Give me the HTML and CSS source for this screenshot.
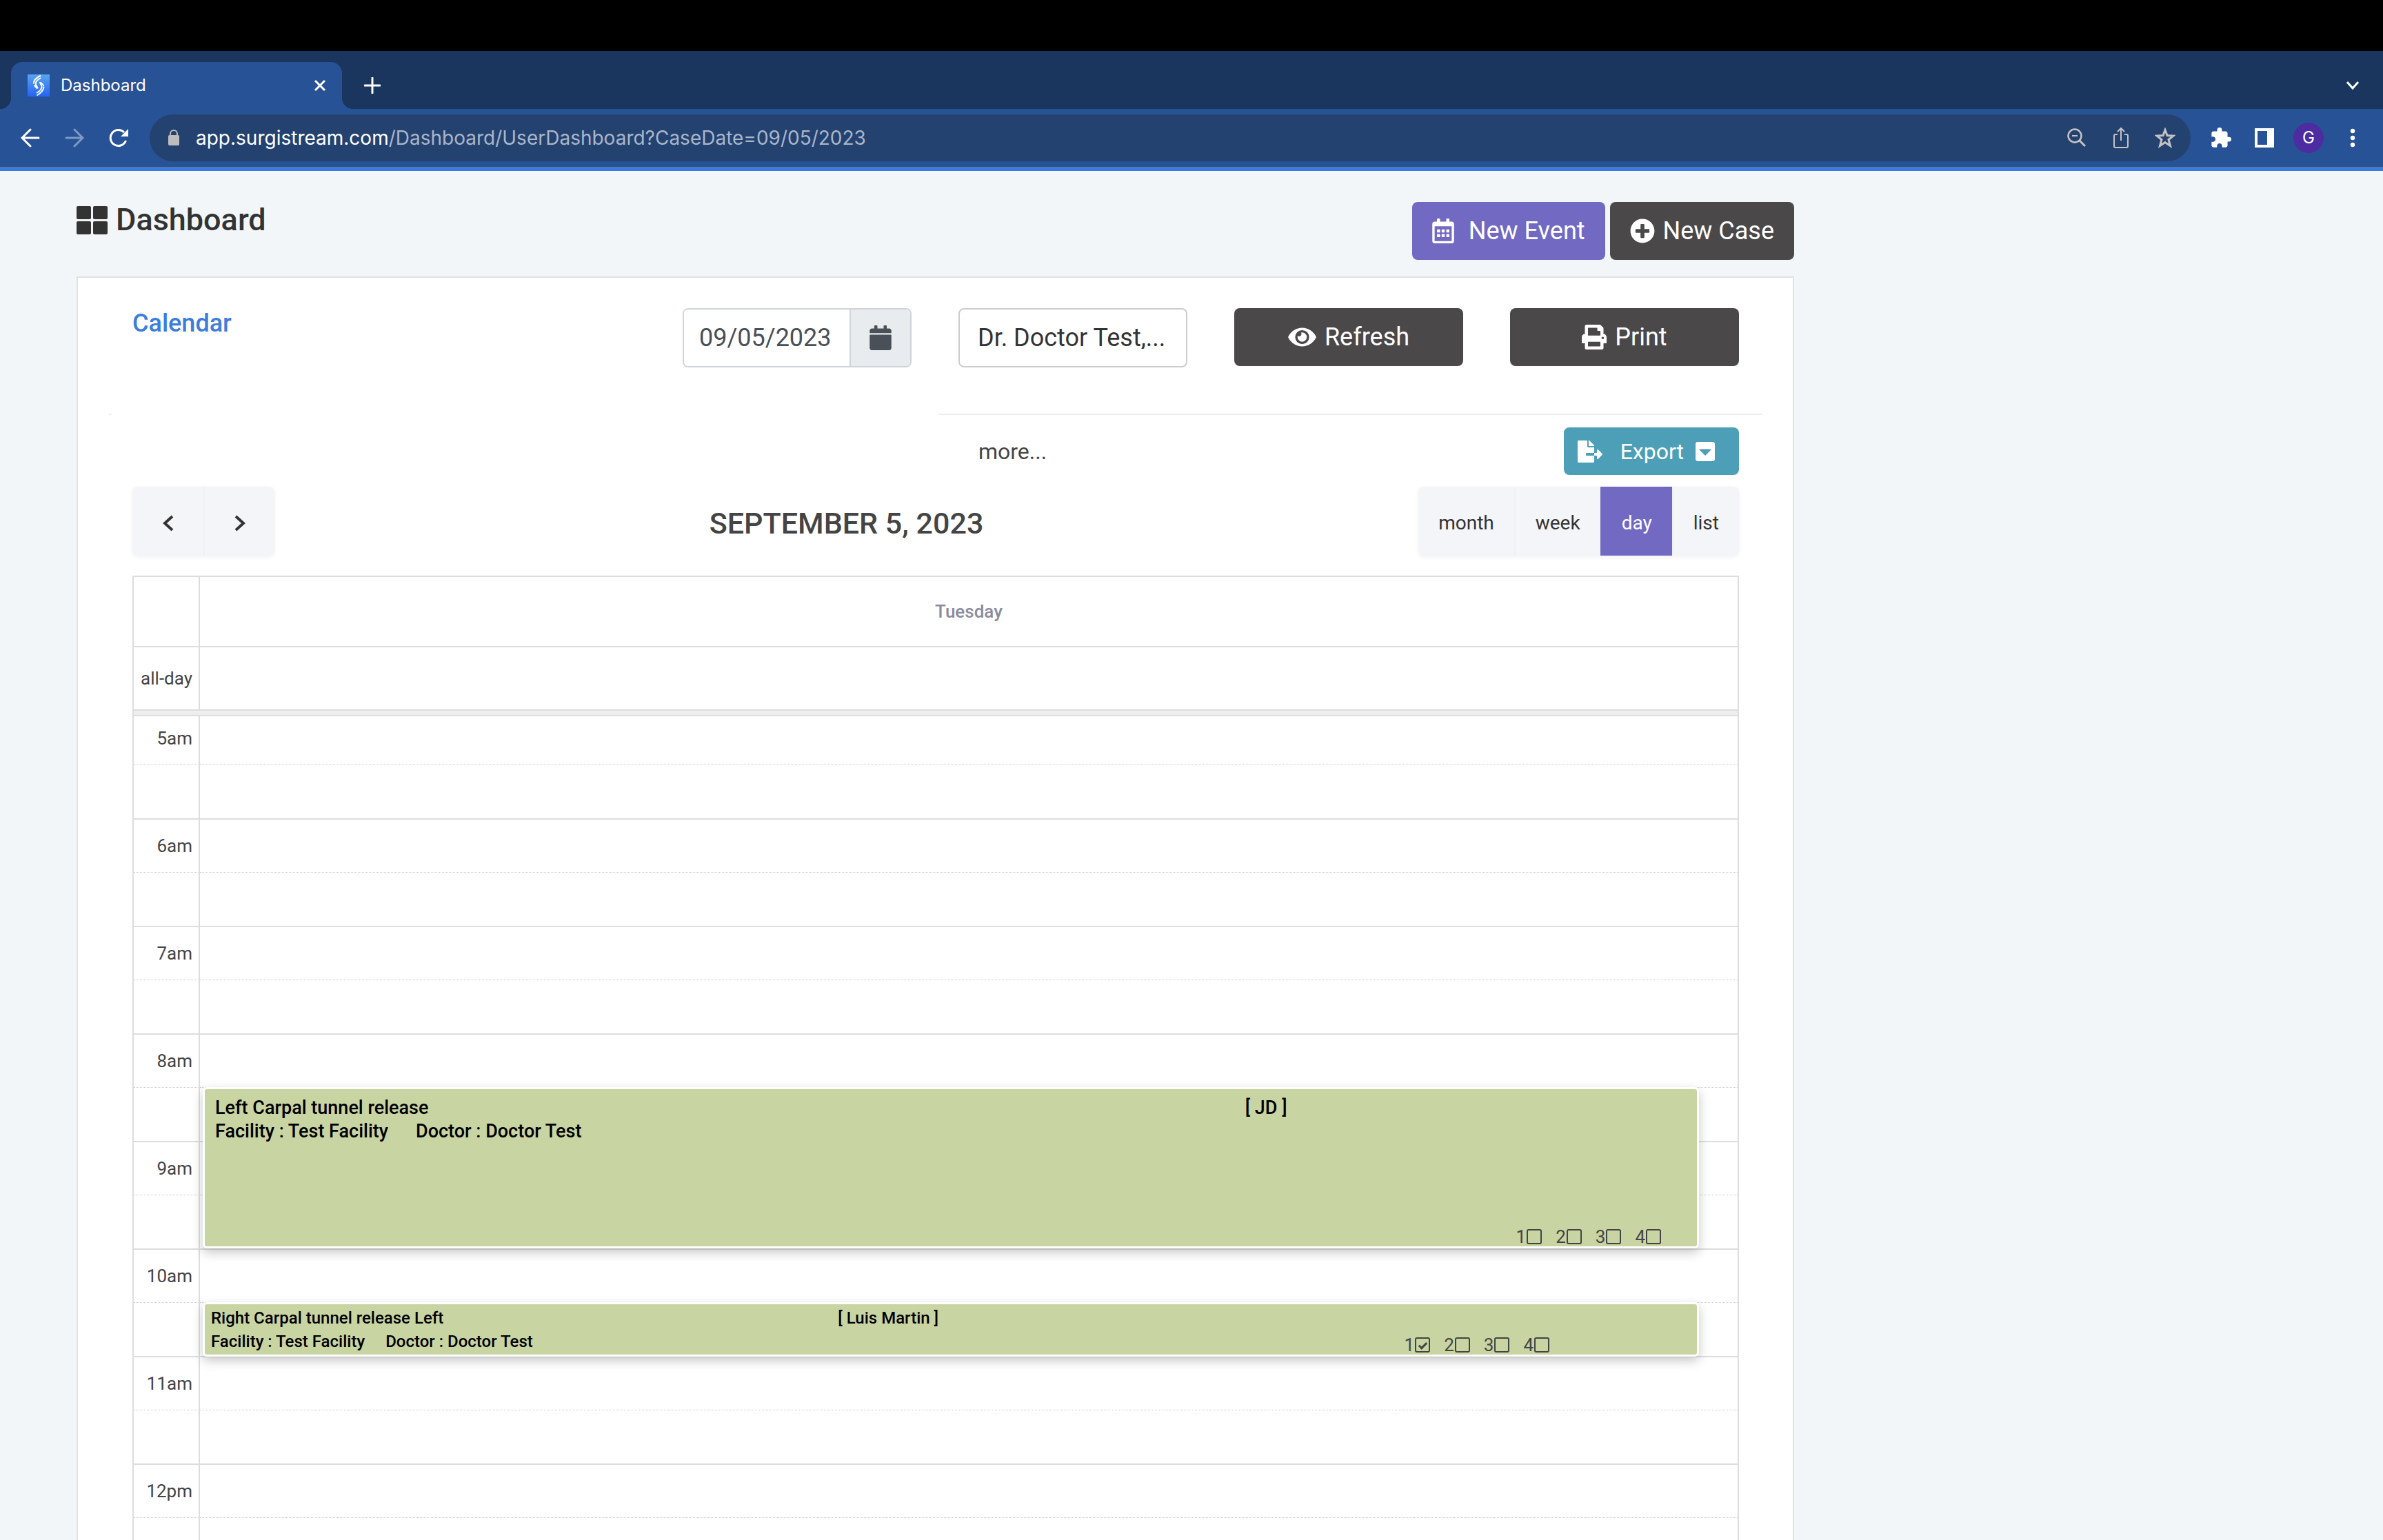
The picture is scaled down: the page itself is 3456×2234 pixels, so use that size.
FILE: index.html
```html
<!DOCTYPE html>
<html lang="en">
<head>
<meta charset="utf-8">
<title>Dashboard</title>
<link rel="stylesheet" href="styles.css">
</head>
<body>
<div class="notch"></div>
<header class="browser">
  <div class="tabstrip">
    <div class="tab">
      <svg class="favicon" viewBox="0 0 32 32"><defs><linearGradient id="fav" x1="0" y1="0" x2="0" y2="1"><stop offset="0" stop-color="#5aa5f0"/><stop offset="1" stop-color="#2563f5"/></linearGradient></defs><rect width="32" height="32" fill="url(#fav)"/><path d="M19 1.500C12 5 8.500 9 9 13.500M19 5C13 8.500 11 11 12 14.500C13 17.500 15 18 14.500 20.500M10 15C10.500 17.500 12 18.500 14 20.500M18 11C17.500 13 20 14.500 20.500 17C21 20 18 24 13 27M18.500 11.500C21 13 23 15 23.500 17.500M23.500 18C23.500 23 19 27 13.500 30.500" fill="none" stroke="#fff" stroke-width="2"/></svg>
      <span class="tab-title">Dashboard</span>
      <button class="plain" aria-label="Close tab"><svg width="18" height="18" viewBox="0 0 18 18"><path d="M2 2L16 16M16 2L2 16" stroke="#fff" stroke-width="3"/></svg></button>
    </div>
    <button class="plain new-tab" aria-label="New tab"><svg width="24" height="24" viewBox="0 0 24 24"><path d="M12 1V23M1 12H23" stroke="#fff" stroke-width="3" stroke-linecap="round"/></svg></button>
    <button class="plain tab-search" aria-label="Search tabs"><svg width="20" height="14" viewBox="0 0 20 14"><path d="M2 2L10 11L18 2" fill="none" stroke="#fff" stroke-width="3"/></svg></button>
  </div>
  <div class="toolbar">
    <div class="nav">
      <button class="plain" aria-label="Back"><svg width="28" height="28" viewBox="0 0 28 28"><path d="M26 14H3M14 2L2 14L14 26" fill="none" stroke="#fff" stroke-width="3" stroke-linecap="round"/></svg></button>
      <button class="plain" aria-label="Forward"><svg width="28" height="28" viewBox="0 0 28 28"><path d="M2 14H25M14 2L26 14L14 26" fill="none" stroke="#7f99c4" stroke-width="3" stroke-linecap="round"/></svg></button>
      <button class="plain" aria-label="Reload"><svg width="28" height="28" viewBox="0 0 28 28"><path d="M24.500 18A11.500 11.500 0 1 1 22 6" fill="none" stroke="#fff" stroke-width="3"/><path d="M28 1V12H17Z" fill="#fff"/></svg></button>
    </div>
    <div class="omnibox">
      <svg width="16" height="24" viewBox="0 0 16 24"><path d="M3 10V6a5 5 0 0 1 10 0V10" fill="none" stroke="#bdbdbd" stroke-width="2"/><rect y="8" width="16" height="15" rx="2" fill="#bdbdbd"/></svg>
      <span class="url"><b>app.surgistream.com</b>/Dashboard/UserDashboard?CaseDate=09/05/2023</span>
      <button class="plain" aria-label="Zoom"><svg width="28" height="28" viewBox="0 0 28 28"><circle cx="12" cy="11" r="9.500" fill="none" stroke="#c4c4c4" stroke-width="2.500"/><path d="M19 18L27 26" stroke="#c4c4c4" stroke-width="3"/><path d="M8 11H16" stroke="#c4c4c4" stroke-width="2"/></svg></button>
      <button class="plain" aria-label="Share"><svg width="28" height="32" viewBox="0 0 28 32"><path d="M10 11H7a2 2 0 0 0-2 2V28a2 2 0 0 0 2 2H23a2 2 0 0 0 2-2V13a2 2 0 0 0-2-2H20M15 20V2M10 7L15 2L20 7" fill="none" stroke="#c4c4c4" stroke-width="2"/></svg></button>
      <button class="plain" aria-label="Bookmark"><svg width="30" height="30" viewBox="0 0 30 30"><path d="M15 3.500L18 11.500L27 12L20 17.500L22.500 26.500L15 21.500L7.500 26.500L10 17.500L3 12L12 11.500Z" fill="none" stroke="#c4c4c4" stroke-width="3"/></svg></button>
    </div>
    <div class="extensions">
      <button class="plain" aria-label="Extensions"><svg width="30" height="30" viewBox="1 1 22 22"><path d="M20.500 11H19V7c0-1.100-.9-2-2-2h-4V3.500a2.500 2.500 0 0 0-5 0V5H4c-1.100 0-2 .9-2 2v3.800h1.500c1.500 0 2.700 1.200 2.700 2.700S5 16.200 3.500 16.200H2V20c0 1.100.9 2 2 2h3.800v-1.500c0-1.500 1.200-2.700 2.700-2.700s2.700 1.200 2.700 2.700V22H17c1.100 0 2-.9 2-2v-4h1.500a2.500 2.500 0 0 0 0-5z" fill="#fff"/></svg></button>
      <button class="plain" aria-label="Side panel"><svg width="28" height="28" viewBox="0 0 28 28"><path fill-rule="evenodd" d="M0 0H28V28H0ZM4 4V24H18V4Z" fill="#fff"/></svg></button>
      <button class="plain avatar" aria-label="Profile">G</button>
      <button class="plain" aria-label="Menu"><svg width="8" height="28" viewBox="0 0 8 28"><g fill="#fff"><circle cx="4" cy="4" r="3.200"/><circle cx="4" cy="14" r="3.200"/><circle cx="4" cy="24" r="3.200"/></g></svg></button>
    </div>
  </div>
</header>
<main class="page">
  <div class="page-head">
    <h1><svg width="45" height="41" viewBox="0 0 45 41"><g fill="#333"><rect width="21" height="19" rx="2"/><rect x="24" width="21" height="19" rx="2"/><rect y="22" width="21" height="19" rx="2"/><rect x="24" y="22" width="21" height="19" rx="2"/></g></svg>Dashboard</h1>
    <div class="actions">
      <button class="btn purple"><svg width="32" height="36" viewBox="0 0 448 512"><path fill="#fff" d="M148 288h-40c-6.600 0-12-5.400-12-12v-40c0-6.600 5.400-12 12-12h40c6.600 0 12 5.400 12 12v40c0 6.600-5.400 12-12 12zm108-12v-40c0-6.600-5.400-12-12-12h-40c-6.600 0-12 5.400-12 12v40c0 6.600 5.400 12 12 12h40c6.600 0 12-5.400 12-12zm96 0v-40c0-6.600-5.400-12-12-12h-40c-6.600 0-12 5.400-12 12v40c0 6.600 5.400 12 12 12h40c6.600 0 12-5.400 12-12zm-96 96v-40c0-6.600-5.400-12-12-12h-40c-6.600 0-12 5.400-12 12v40c0 6.600 5.400 12 12 12h40c6.600 0 12-5.400 12-12zm-96 0v-40c0-6.600-5.400-12-12-12h-40c-6.600 0-12 5.400-12 12v40c0 6.600 5.400 12 12 12h40c6.600 0 12-5.400 12-12zm192 0v-40c0-6.600-5.400-12-12-12h-40c-6.600 0-12 5.400-12 12v40c0 6.600 5.400 12 12 12h40c6.600 0 12-5.400 12-12zm96-260v352c0 26.500-21.500 48-48 48H48c-26.500 0-48-21.500-48-48V112c0-26.500 21.500-48 48-48h48V12c0-6.600 5.400-12 12-12h40c6.600 0 12 5.400 12 12v52h128V12c0-6.600 5.400-12 12-12h40c6.600 0 12 5.400 12 12v52h48c26.500 0 48 21.500 48 48zm-48 346V160H48v298c0 3.300 2.700 6 6 6h340c3.300 0 6-2.700 6-6z"/></svg>New Event</button>
      <button class="btn case"><svg width="36" height="36" viewBox="0 0 512 512"><path fill="#fff" d="M256 8C119 8 8 119 8 256s111 248 248 248 248-111 248-248S393 8 256 8zm144 276c0 6.600-5.400 12-12 12h-92v92c0 6.600-5.400 12-12 12h-56c-6.600 0-12-5.400-12-12v-92h-92c-6.600 0-12-5.400-12-12v-56c0-6.600 5.400-12 12-12h92v-92c0-6.600 5.400-12 12-12h56c6.600 0 12 5.400 12 12v92h92c6.600 0 12 5.400 12 12v56z"/></svg>New Case</button>
    </div>
  </div>
  <section class="card">
    <div class="card-head">
      <h2>Calendar</h2>
      <div class="filters">
        <div class="date-group">
          <input type="text" value="09/05/2023" aria-label="Date">
          <button aria-label="Pick a date"><svg width="32" height="36" viewBox="0 0 448 512"><path fill="#495057" d="M12 192h424c6.600 0 12 5.400 12 12v260c0 26.500-21.500 48-48 48H48c-26.500 0-48-21.500-48-48V204c0-6.600 5.400-12 12-12zm436-44v-36c0-26.500-21.500-48-48-48h-48V12c0-6.600-5.400-12-12-12h-40c-6.600 0-12 5.400-12 12v52H160V12c0-6.600-5.400-12-12-12h-40c-6.600 0-12 5.400-12 12v52H48C21.500 64 0 85.500 0 112v36c0 6.600 5.400 12 12 12h424c6.600 0 12-5.400 12-12z"/></svg></button>
        </div>
        <select class="doctor" aria-label="Doctor"><option>Dr. Doctor Test,...</option></select>
        <button class="btn"><svg width="41" height="36" viewBox="0 0 576 512"><path fill="#fff" d="M572.500 241.400C518.300 135.600 410.900 64 288 64S57.700 135.600 3.500 241.400a32.400 32.400 0 0 0 0 29.200C57.700 376.400 165.100 448 288 448s230.300-71.600 284.500-177.400a32.400 32.400 0 0 0 0-29.200zM288 400a144 144 0 1 1 144-144 143.900 143.900 0 0 1-144 144zm0-240a95.300 95.300 0 0 0-25.300 3.800 47.900 47.900 0 0 1-66.900 66.900A95.800 95.800 0 1 0 288 160z"/></svg>Refresh</button>
        <button class="btn"><svg width="36" height="36" viewBox="0 0 512 512"><path fill="#fff" d="M448 192V77.300c0-8.500-3.400-16.600-9.400-22.600L393.400 9.400c-6-6-14.100-9.400-22.600-9.400H96C78.300 0 64 14.300 64 32v160c-35.300 0-64 28.700-64 64v112c0 8.800 7.200 16 16 16h48v96c0 17.700 14.300 32 32 32h320c17.700 0 32-14.300 32-32v-96h48c8.800 0 16-7.200 16-16V256c0-35.300-28.700-64-64-64zm-64 256H128v-96h256v96zm0-224H128V64h192v48c0 8.800 7.200 16 16 16h48v96zm48 72c-13.300 0-24-10.700-24-24s10.700-24 24-24 24 10.700 24 24-10.700 24-24 24z"/></svg>Print</button>
      </div>
    </div>
    <hr>
    <div class="card-body">
      <div class="export-row">
        <a class="more" href="#">more...</a>
        <button class="btn export"><svg width="36" height="32" viewBox="0 0 576 512"><path fill="#fff" d="M384 121.900c0-6.300-2.500-12.400-7-16.900L279.100 7c-4.500-4.500-10.600-7-17-7H256v128h128zM571 308l-95.700-96.400c-10.100-10.100-27.400-3-27.400 11.300V288h-64v64h64v65.200c0 14.300 17.300 21.400 27.400 11.300L571 332c6.600-6.600 6.600-17.400 0-24zm-379 28v-32c0-8.800 7.200-16 16-16h176V160H248c-13.200 0-24-10.800-24-24V0H24C10.700 0 0 10.700 0 24v464c0 13.300 10.700 24 24 24h336c13.300 0 24-10.700 24-24V352H208c-8.800 0-16-7.200-16-16z"/></svg><span>Export</span><svg width="28" height="32" viewBox="0 0 448 512"><path fill="#fff" d="M448 80v352c0 26.500-21.500 48-48 48H48c-26.500 0-48-21.500-48-48V80c0-26.500 21.500-48 48-48h352c26.500 0 48 21.500 48 48zM92.500 220.500l123 123c4.700 4.700 12.300 4.700 17 0l123-123c7.600-7.600 2.200-20.500-8.500-20.500H101c-10.700 0-16 12.900-8.500 20.500z"/></svg></button>
      </div>
      <div class="cal-bar">
        <div class="group">
          <button class="arrow" aria-label="Previous"><svg width="18" height="24" viewBox="0 0 18 24"><path d="M15 2L4 12L15 22" fill="none" stroke="#333" stroke-width="4"/></svg></button>
          <button class="arrow" aria-label="Next"><svg width="18" height="24" viewBox="0 0 18 24"><path d="M3 2L14 12L3 22" fill="none" stroke="#333" stroke-width="4"/></svg></button>
        </div>
        <h3>SEPTEMBER 5, 2023</h3>
        <div class="group views">
          <button>month</button><button>week</button><button class="on">day</button><button>list</button>
        </div>
      </div>
      <div class="calendar">
        <table class="days">
          <thead><tr><th class="axis"></th><th>Tuesday</th></tr></thead>
          <tbody><tr><td class="axis">all-day</td><td></td></tr></tbody>
        </table>
        <div class="divider"></div>
        <div class="slots">
          <table>
            <tbody>
              <tr><td class="axis">5am</td><td></td></tr><tr class="half"><td class="axis"></td><td></td></tr>
              <tr><td class="axis">6am</td><td></td></tr><tr class="half"><td class="axis"></td><td></td></tr>
              <tr><td class="axis">7am</td><td></td></tr><tr class="half"><td class="axis"></td><td></td></tr>
              <tr><td class="axis">8am</td><td></td></tr><tr class="half"><td class="axis"></td><td></td></tr>
              <tr><td class="axis">9am</td><td></td></tr><tr class="half"><td class="axis"></td><td></td></tr>
              <tr><td class="axis">10am</td><td></td></tr><tr class="half"><td class="axis"></td><td></td></tr>
              <tr><td class="axis">11am</td><td></td></tr><tr class="half"><td class="axis"></td><td></td></tr>
              <tr><td class="axis">12pm</td><td></td></tr><tr class="half"><td class="axis"></td><td></td></tr>
            </tbody>
          </table>
          <article class="event first">
            <div class="event-title"><span>Left Carpal tunnel release</span><span>[ JD ]</span></div>
            <div class="event-info"><span>Facility : Test Facility</span><span>Doctor : Doctor Test</span></div>
            <div class="checks"><label>1<input type="checkbox"></label><label>2<input type="checkbox"></label><label>3<input type="checkbox"></label><label>4<input type="checkbox"></label></div>
          </article>
          <article class="event second">
            <div class="event-title"><span>Right Carpal tunnel release Left</span><span>[ Luis Martin ]</span></div>
            <div class="event-info"><span>Facility : Test Facility</span><span>Doctor : Doctor Test</span></div>
            <div class="checks"><label>1<input type="checkbox" checked></label><label>2<input type="checkbox"></label><label>3<input type="checkbox"></label><label>4<input type="checkbox"></label></div>
          </article>
        </div>
      </div>
    </div>
  </section>
</main>
</body>
</html>
```
FILE: styles.css
```css
*, *::before, *::after { box-sizing: border-box; }
body { margin: 0; height: 100vh; overflow: hidden; display: flex; flex-direction: column; background: #f2f6f9; color: #444; font: 400 26px/32px Roboto, sans-serif; }
button, input, select { font: inherit; color: inherit; margin: 0; }
button { cursor: pointer; }
svg { display: block; flex: none; }
h1, h2, h3 { margin: 0; font-weight: 500; }
.plain { border: 0; padding: 0; background: none; flex: none; }

/* Browser window */
.notch { height: 74px; background: #000; flex: none; }
.browser { flex: none; font-family: Inter, sans-serif; border-bottom: 4px solid #3b7be0; }
.tabstrip { height: 84px; background: #1a355e; display: flex; align-items: flex-end; padding: 0 34px 0 16px; }
.tab { position: relative; width: 480px; height: 68px; border-radius: 16px 16px 0 0; background: #285296; display: flex; align-items: center; padding: 0 23px 0 24px; }
.tab::before, .tab::after { content: ""; position: absolute; bottom: 0; width: 16px; height: 16px; }
.tab::before { right: 100%; background: radial-gradient(circle at 0 0, transparent 16px, #285296 16px); }
.tab::after { left: 100%; background: radial-gradient(circle at 100% 0, transparent 16px, #285296 16px); }
.favicon { width: 32px; height: 32px; }
.tab-title { flex: 1; margin-left: 16px; color: #fff; font-size: 24px; }
.new-tab { margin: 0 auto 22px 32px; }
.tab-search { margin-bottom: 27px; }
.toolbar { background: #285296; border-bottom: 2px solid #4e7cae; padding: 8px 40px 8px 30px; display: flex; align-items: center; }
.nav { display: flex; gap: 36px; margin-right: 31px; }
.omnibox { flex: 1; height: 68px; border-radius: 34px; background: #24426f; display: flex; align-items: center; padding: 0 22px 0 27px; }
.url { flex: 1; margin-left: 24px; font-size: 28px; color: #a9b6cb; }
.url b { font-weight: 400; color: #fff; }
.omnibox .plain + .plain { margin-left: 36px; }
.extensions { display: flex; align-items: center; margin-left: 29px; }
.extensions .plain + .plain { margin-left: 34px; }
.extensions .avatar { width: 44px; height: 44px; border-radius: 50%; background: #4c2ca0; color: #fff; font-size: 24px; }
.extensions .plain + .avatar { margin-left: 28px; }
.extensions .avatar + .plain { margin-left: 38px; }

/* Page heading */
.page { flex: 1; min-height: 0; padding: 45px 854px 0 111px; }
.page-head { display: flex; justify-content: space-between; margin-bottom: 24px; }
h1 { display: flex; align-items: center; gap: 12px; height: 52px; font-size: 45px; color: #333; }
.actions { display: flex; gap: 7px; }
.btn { height: 84px; border: 0; border-radius: 8px; background: #4a4849; color: #fff; font-size: 36px; display: flex; align-items: center; justify-content: center; gap: 12px; padding: 0 29px; }
.btn.purple { background: #7169c2; gap: 21px; }
.btn.export { height: 69px; padding: 0 35px 0 20px; background: #4c9fb6; font-size: 32px; gap: 17px; }
.export span { margin-left: 9px; }

/* Calendar card */
.card { background: #fff; border: 2px solid #e0e2e4; padding: 44px 44px 0 34px; }
.card-head { display: flex; justify-content: space-between; padding: 0 34px 0 45px; }
h2 { font-size: 36px; line-height: 44px; color: #3c7edd; }
.filters { display: grid; grid-template-columns: repeat(4, 332px); gap: 68px; }
.date-group { display: flex; height: 86px; border: 2px solid #ced4da; border-radius: 8px; overflow: hidden; }
.date-group input { flex: 1; min-width: 0; border: 0; padding: 0 22px; font-size: 36px; color: #495057; }
.date-group button { width: 88px; border: 0; border-left: 2px solid #ced4da; background: #e9ecef; display: grid; place-items: center; padding: 0; }
.doctor { appearance: none; height: 86px; border: 2px solid #ccc; border-radius: 8px; background: #fff; padding: 0 26px; font-size: 36px; color: #333; }
hr { height: 2px; margin: 67px 0 18px 11px; border: 0; background: linear-gradient(#ededed, #ededed) left / 4px 2px no-repeat, linear-gradient(#ededed, #ededed) right / 1195px 2px no-repeat; }
.card-body { padding: 0 34px 0 45px; }
.export-row { display: grid; grid-template-columns: 1fr auto; align-items: center; }
.more { padding-left: 1227px; font-size: 32px; color: #444; text-decoration: none; }
.cal-bar { display: flex; align-items: center; justify-content: space-between; margin: 17px 0 29px; }
.group { display: flex; height: 100px; border-radius: 8px; box-shadow: 0 2px 6px rgba(0, 0, 0, .06); background: #f4f5f8; }
.group button { border: 0; background: none; padding: 5px 29px 0; font-size: 28px; color: #333; }
.group button + button { border-left: 2px solid #eff1f5; }
.group .arrow { width: 103px; display: grid; place-items: center; padding: 5px 0 0; }
.views .on { background: #7169c2; color: #fff; }
.group .on { background: #7169c2; border-color: #7169c2; color: #fff; }
h3 { padding-top: 5px; font-size: 43px; color: #444; }
.calendar { border: 2px solid #ddd; border-bottom: 0; }
table { width: 100%; table-layout: fixed; border-collapse: separate; border-spacing: 0; }
th, td { padding: 0; font-weight: 400; }
.axis { width: 96px; padding-right: 9px; border-right: 2px solid #ddd; text-align: right; white-space: nowrap; }
.days th { height: 102px; border-bottom: 2px solid #ddd; font-weight: 500; color: #8a8c9e; }
.days td { height: 90px; }
.divider { position: relative; z-index: 1; height: 10px; background: #eee; border: solid #ddd; border-width: 2px 0; }
.slots { position: relative; margin-top: -8px; }
.slots td { height: 78px; border-top: 2px solid #ddd; }
.slots .half td { border-top: 1px dotted #ccc; }

/* Scheduled cases */
.event { position: absolute; left: 100px; right: 56px; border: 3px solid #fff; border-radius: 6px; background: #c9d4a3; color: #000; font-weight: 500; line-height: 34px; box-shadow: 0 6px 16px rgba(0, 0, 0, .22); }
.event.first { top: 546px; height: 234px; padding: 10px 15px; font-size: 27px; }
.event.second { top: 858px; height: 79px; padding: 3px 9px; font-size: 24px; }
.event-title { display: grid; grid-template-columns: 70% 1fr; }
.second .event-title { grid-template-columns: calc(42% + 8px) 1fr; }
.event-info { display: flex; gap: 40px; }
.second .event-info { gap: 30px; }
.checks { position: absolute; right: 52px; bottom: 0; display: flex; gap: 20px; color: #444; font-size: 26px; font-weight: 400; line-height: 28px; }
.second .checks { right: 214px; }
.checks label { display: flex; align-items: center; gap: 1px; }
.checks input { appearance: none; display: grid; place-items: center; width: 22px; height: 22px; border: 2px solid #444; border-radius: 3px; }
.checks input:checked::after { content: ""; width: 7px; height: 12px; border: solid #444; border-width: 0 3px 3px 0; transform: rotate(45deg); }
```
